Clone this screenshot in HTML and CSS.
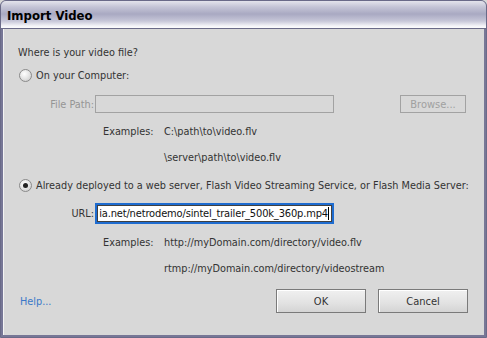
FILE: index.html
```html
<!DOCTYPE html>
<html>
<head>
    <title>Import Video</title>
    <link rel="stylesheet" href="styles.css">
</head>
<body>
    <div class="window">
        <div class="titlebar">Import Video</div>
        <div class="content">
            <div class="row question">Where is your video file?</div>

            <div class="row option first-option">
                <span class="radio"></span>
                <span>On your Computer:</span>
            </div>
            <div class="row field-row path-row">
                <span class="field-label disabled">File Path:</span>
                <div class="textbox disabled-box"></div>
                <div class="spacer"></div>
                <button class="btn browse" disabled>Browse...</button>
            </div>
            <div class="row example ex-first">
                <span class="example-label">Examples:</span>
                <span>C:\path\to\video.flv</span>
            </div>
            <div class="row example ex-next">
                <span class="example-label"></span>
                <span>\server\path\to\video.flv</span>
            </div>

            <div class="row option second-option">
                <span class="radio checked"></span>
                <span>Already deployed to a web server, Flash Video Streaming Service, or Flash Media Server:</span>
            </div>
            <div class="row field-row url-row">
                <span class="field-label">URL:</span>
                <div class="textbox active-box"><span class="url-text">ia.net/netrodemo/sintel_trailer_500k_360p.mp4</span><span class="caret"></span></div>
            </div>
            <div class="row example ex-first2">
                <span class="example-label">Examples:</span>
                <span>http://myDomain.com/directory/video.flv</span>
            </div>
            <div class="row example ex-next">
                <span class="example-label"></span>
                <span>rtmp://myDomain.com/directory/videostream</span>
            </div>

            <div class="footer">
                <a href="#" class="help">Help...</a>
                <div class="spacer"></div>
                <button class="btn">OK</button>
                <button class="btn">Cancel</button>
            </div>
        </div>
    </div>
</body>
</html>
```

FILE: styles.css
```css
body {
    margin: 0;
    background-color: #d8d8d8;
    font-family: "DejaVu Sans Condensed", "DejaVu Sans", sans-serif;
    font-size: 10.8px;
    color: #333333;
}
.window {
    width: 487px;
    height: 338px;
    box-sizing: border-box;
    border: 1px solid #6a6a88;
    border-radius: 6px 6px 0 0;
    background-color: #777796;
    overflow: hidden;
    display: flex;
    flex-direction: column;
}
.titlebar {
    height: 28px;
    box-sizing: border-box;
    padding: 7px 0 0 6px;
    font-family: "DejaVu Sans Condensed", "DejaVu Sans", sans-serif;
    font-size: 13px;
    font-weight: bold;
    color: #000000;
    background: linear-gradient(#e4e4ec 0px, #c4c4d6 6px, #a9a9c2 13px, #c6c6d8 20px, #f4f4f8 25px, #ffffff 28px);
    border-bottom: 1px solid #6a6a88;
}
.content {
    flex: 1;
    margin: 0 2px 2px 2px;
    padding: 14px 16px 0 15px;
    background-color: #d8d8d8;
    box-shadow: inset 1px 0 0 #f4f4f4;
    display: flex;
    flex-direction: column;
}
.row {
    display: flex;
    align-items: center;
    height: 18px;
    white-space: nowrap;
}
.option {
    gap: 4px;
}
.first-option { margin-top: 5px; padding-left: 1px; }
.second-option { margin-top: 10px; padding-left: 1px; }
.radio {
    width: 11px;
    height: 11px;
    border: 1px solid #8a8a8a;
    border-radius: 50%;
    background: radial-gradient(circle at 40% 35%, #ffffff 0, #e4e4e4 50%, #c4c4c4 100%);
    position: relative;
    flex: none;
}
.radio.checked::after {
    content: "";
    position: absolute;
    left: 3px;
    top: 3px;
    width: 5px;
    height: 5px;
    border-radius: 50%;
    background-color: #222222;
}
.field-label {
    width: 76px;
    text-align: right;
    padding-right: 1px;
    flex: none;
}
.disabled {
    color: #959595;
}
.path-row {
    margin-top: 11px;
}
.url-row {
    margin-top: 9px;
    height: 21px;
}
.textbox {
    box-sizing: border-box;
    flex: none;
    width: 239px;
}
.disabled-box {
    height: 18px;
    border: 1px solid #a2a2a2;
    background-color: #d8d8d8;
}
.active-box {
    height: 21px;
    border: 2px solid #1e6cd0;
    box-shadow: inset 0 0 0 1px #404040;
    background-color: #ffffff;
    color: #111111;
    padding: 0 3px 0 3px;
    font-size: 11px;
    display: flex;
    align-items: center;
    justify-content: flex-end;
    overflow: hidden;
}
.url-text {
    letter-spacing: -0.15px;
}
.caret {
    display: inline-block;
    width: 1px;
    height: 13px;
    background-color: #000000;
    flex: none;
}
.spacer {
    flex: 1;
}
.btn {
    box-sizing: border-box;
    font-family: inherit;
    font-size: 11px;
    color: #333333;
    border: 1px solid #7a7a7a;
    border-radius: 0;
    background: linear-gradient(#f0f0f0, #e2e2e2 60%, #d4d4d4);
    box-shadow: inset 1px 1px 0 #ffffff;
    padding: 0;
}
.browse {
    width: 66px;
    height: 18px;
    margin-right: 2px;
    color: #a0a0a0;
    background: #d8d8d8;
    border-color: #a2a2a2;
    box-shadow: none;
}
.example {
    color: #333333;
}
.example-label {
    width: 61px;
    padding-left: 85px;
    flex: none;
}
.ex-first { margin-top: 9px; }
.ex-first2 { margin-top: 9px; }
.ex-next { margin-top: 8px; }
.footer {
    display: flex;
    align-items: center;
    gap: 12px;
    margin-top: 12px;
    padding-left: 2px;
}
.footer .btn {
    width: 90px;
    height: 24px;
}
.help {
    color: #3a78c8;
    text-decoration: none;
}
```
